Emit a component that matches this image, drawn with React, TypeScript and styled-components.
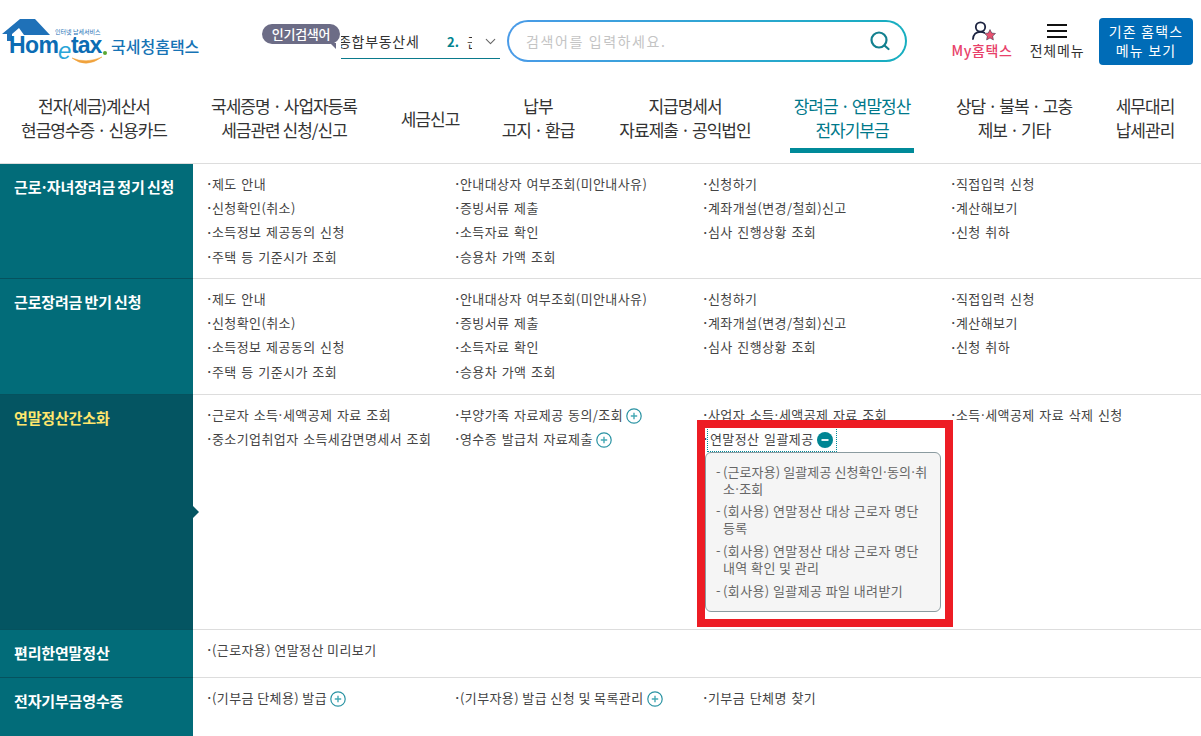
import styled, { createGlobalStyle } from 'styled-components';
import { ChevronDown } from 'lucide-react';

const GlobalStyle = createGlobalStyle`
  html, body { margin: 0; height: 736px; overflow: hidden; background: #fff; }
  body { font-family: "Noto Sans CJK KR", "Noto Sans", sans-serif; color: #333; }
  ul { list-style: none; margin: 0; padding: 0; }
`;

const Page = styled.div`
  position: relative;
  width: 1201px;
`;

const TopBar = styled.header`
  display: flex;
  align-items: flex-start;
  height: 77px;
`;

const LogoBox = styled.div`
  width: 262px;
  padding-top: 14px;
  flex: none;

  svg { display: block; }
`;

const PopularBox = styled.div`
  position: relative;
  width: 159px;
  height: 37px;
  margin: 21px 0 0 79px;
  border-bottom: 1px solid #0a7a8c;
  display: flex;
  align-items: center;
  flex: none;
`;

const PopularBubble = styled.div`
  position: absolute;
  left: -79px;
  top: 3px;
  width: 78px;
  height: 20px;
  border-radius: 10px;
  background: #6c6c86;
  color: #fff;
  font-size: 13px;
  font-weight: 500;
  line-height: 19px;
  text-align: center;
  letter-spacing: -0.3px;

  &::after {
    content: '';
    position: absolute;
    right: 4px;
    bottom: -5px;
    border-top: 6px solid #6c6c86;
    border-left: 6px solid transparent;
  }
`;

const PopularFirst = styled.span`
  width: 106px;
  margin-top: 3px;
  font-size: 14px;
  color: #333;
  letter-spacing: 0.7px;
  white-space: nowrap;
  overflow: hidden;
  flex: none;
  text-indent: -3px;
`;

const PopularSecond = styled.span`
  width: 25px;
  margin-top: 3px;
  font-size: 13px;
  font-weight: 700;
  color: #00838f;
  white-space: nowrap;
  overflow: hidden;
  flex: none;

  i {
    font-style: normal;
    font-weight: 400;
    color: #333;
    margin-left: 8px;
  }
`;

const PopularArrow = styled(ChevronDown)`
  margin: 3px 0 0 10px;
  color: #666;
  flex: none;
`;

const SearchBox = styled.div`
  width: 400px;
  height: 42px;
  margin: 20px 0 0 7px;
  padding: 2px;
  box-sizing: border-box;
  border-radius: 21px;
  background: linear-gradient(90deg, #4a9be8 0%, #16aebf 100%);
  flex: none;
`;

const SearchInner = styled.div`
  height: 100%;
  border-radius: 19px;
  background: #fff;
  display: flex;
  align-items: center;
  justify-content: space-between;
  padding: 0 14px 0 17px;
  color: #c4c4c4;
  font-size: 14px;
  letter-spacing: 1.6px;

  svg { display: block; }
`;

const MyMenu = styled.div`
  width: 64px;
  margin: 21px 0 0 43px;
  display: flex;
  flex-direction: column;
  align-items: center;
  color: #e8416a;
  font-size: 14px;
  line-height: 18px;
  font-weight: 500;
  letter-spacing: 0.6px;
  flex: none;
  white-space: nowrap;

  svg { display: block; margin: 0 0 -1px 3px; }
`;

const AllMenu = styled.div`
  width: 56px;
  margin: 23px 0 0 15px;
  display: flex;
  flex-direction: column;
  align-items: center;
  color: #333;
  font-size: 14px;
  line-height: 18px;
  letter-spacing: 0.8px;
  flex: none;
  white-space: nowrap;

  svg { display: block; margin: 1px 0 3px; }
`;

const OldMenuButton = styled.div`
  width: 94px;
  height: 47px;
  margin: 18px 0 0 14px;
  padding-top: 4px;
  box-sizing: border-box;
  border-radius: 4px;
  background: #006cb7;
  color: #fff;
  font-size: 14px;
  line-height: 18.5px;
  letter-spacing: 1.2px;
  text-align: center;
  flex: none;
`;

const Nav = styled.nav`
  display: grid;
  grid-template-columns: 188px 192px 100px 116px 178px 156px 168px 94px;
  height: 86px;
  border-bottom: 1px solid #ddd;
`;

const NavItem = styled.div`
  display: flex;
  justify-content: center;
  padding-top: 17px;
`;

const NavLabel = styled.div<{ $active?: boolean }>`
  align-self: flex-start;
  min-height: ${(p) => (p.$active ? '54px' : 'auto')};
  padding: 0 4px;
  border-bottom: ${(p) => (p.$active ? '5px solid #008a99' : 'none')};
  color: ${(p) => (p.$active ? '#00788a' : '#333')};
  font-size: 17px;
  line-height: 24px;
  letter-spacing: -1px;
  text-align: center;
  white-space: nowrap;
`;

const SingleLabel = styled(NavLabel)`
  align-self: center;
  margin-top: -19px;
`;

const Row = styled.section<{ $height: number }>`
  display: flex;
  height: ${(p) => p.$height}px;
  border-bottom: 1px solid #ddd;
  box-sizing: border-box;
`;

const Side = styled.h3<{ $current?: boolean }>`
  position: relative;
  width: 193px;
  margin: 0 0 -1px;
  padding: 11px 0 0 14px;
  box-sizing: border-box;
  flex: none;
  background: ${(p) => (p.$current ? '#045562' : '#026c79')};
  border-bottom: 1px solid #05525e;
  color: ${(p) => (p.$current ? '#ffe66d' : '#fff')};
  font-size: 15px;
  line-height: 24px;
  font-weight: 700;
  letter-spacing: -0.15px;
  white-space: nowrap;
  word-spacing: -1px;

  ${(p) =>
    p.$current &&
    `&::after {
      content: '';
      position: absolute;
      left: 100%;
      top: 111px;
      border-left: 6px solid #045562;
      border-top: 6px solid transparent;
      border-bottom: 6px solid transparent;
    }`}
`;

const Columns = styled.div`
  display: grid;
  grid-template-columns: repeat(4, 248px);
  padding: 7px 0 0 14px;
  align-content: start;
`;

const Item = styled.li`
  display: flex;
  align-items: center;
  height: 24.3px;
  font-size: 13px;
  color: #444;
  letter-spacing: 0.4px;
  word-spacing: 1.3px;
  white-space: pre;

  &::before {
    content: '·';
    width: 6px;
    margin-left: -1px;
    flex: none;
    font-weight: 700;
    font-size: 11px;
    letter-spacing: 0;
  }
`;

const NarrowItem = styled(Item)`
  word-spacing: 0;
`;

const Dot = styled.span`
  margin: 0 -1.6px;
`;

const RoundIcon = styled.svg`
  display: block;
  margin: 4px 0 0 3px;
  flex: none;
`;

const Toggle = styled.span`
  display: flex;
  align-items: center;
  height: 24.3px;
  padding: 0 3px 0 2px;
  outline: 1px dotted #008a99;
`;

const SubList = styled.ul`
  width: 236px;
  height: 160px;
  margin: 1px 0 0 2px;
  padding: 10px 8px 0 8px;
  box-sizing: border-box;
  border: 1px solid #8b9ba0;
  border-radius: 6px;
  background: #f5f5f5;
`;

const SubItem = styled.li<{ $tight?: boolean }>`
  position: relative;
  padding-left: 9px;
  margin-bottom: 5.8px;
  color: #666;
  font-size: 13px;
  line-height: 17px;
  letter-spacing: ${(p) => (p.$tight ? '0.1px' : '0.4px')};
  word-break: break-all;

  &::before {
    content: '-';
    position: absolute;
    left: 2px;
    top: -1px;
  }
`;

const Highlight = styled.div`
  position: absolute;
  left: 697px;
  top: 420px;
  width: 256px;
  height: 207px;
  box-sizing: border-box;
  border: 8px solid #ed1c24;
  pointer-events: none;
`;

const Plus = () => (
  <RoundIcon width="16" height="16" viewBox="0 0 16 16">
    <circle cx="8" cy="8" r="7.2" fill="#fff" stroke="#2a93a3" strokeWidth="1.2" />
    <path d="M8 4.8v6.4M4.8 8h6.4" stroke="#45a9b5" strokeWidth="1.4" />
  </RoundIcon>
);

const Minus = () => (
  <RoundIcon width="16" height="16" viewBox="0 0 16 16">
    <circle cx="8" cy="8" r="8" fill="#008593" />
    <path d="M4.5 8h7" stroke="#fff" strokeWidth="1.8" />
  </RoundIcon>
);

const Logo = () => (
  <svg width="205" height="60" viewBox="0 0 205 60">
    <path d="M2 20 L20 5 H35 L50 21 H24 L19 14 L12 20 V27 H7 V20 Z" fill="#1f71b8" />
    <text x="55" y="19.5" fontSize="6" fill="#1a6fb5" fontFamily="Noto Sans CJK KR">인터넷 납세서비스</text>
    <text x="9" y="39" fontSize="23" fontWeight="700" fill="#0b6cb4" letterSpacing="-0.6" fontFamily="Liberation Sans">Hom</text>
    <text x="58" y="45" fontSize="24" fill="#2aa5d8" fontStyle="italic" fontFamily="Liberation Sans">e</text>
    <text x="71" y="39" fontSize="23" fontWeight="700" fill="#0b6cb4" letterSpacing="-1" fontFamily="Liberation Sans">tax</text>
    <circle cx="105" cy="39" r="2" fill="#5aa832" />
    <path d="M72 44 Q86 55 102 43 Q86 50 72 44 Z" fill="#f0a23c" stroke="#f0a23c" strokeWidth="0.5" />
    <text x="111" y="38.5" fontSize="16" fontWeight="500" fill="#1673b5" fontFamily="Noto Sans CJK KR">국세청홈택스</text>
  </svg>
);

// the middle dots sit tighter in the reference than the font's own advance
const dotted = (text: string) =>
  text.split('·').map((part, i) => (
    <span key={i}>{i > 0 && <Dot>·</Dot>}{part}</span>
  ));

const rows = [
  {
    title: '근로·자녀장려금 정기 신청',
    height: 115,
    columns: [
      ['제도 안내', '신청확인(취소)', '소득정보 제공동의 신청', '주택 등 기준시가 조회'],
      ['안내대상자 여부조회(미안내사유)', '증빙서류 제출', '소득자료 확인', '승용차 가액 조회'],
      ['신청하기', '계좌개설(변경/철회)신고', '심사 진행상황 조회'],
      ['직접입력 신청', '계산해보기', '신청 취하'],
    ],
  },
  {
    title: '근로장려금 반기 신청',
    height: 116,
    columns: [
      ['제도 안내', '신청확인(취소)', '소득정보 제공동의 신청', '주택 등 기준시가 조회'],
      ['안내대상자 여부조회(미안내사유)', '증빙서류 제출', '소득자료 확인', '승용차 가액 조회'],
      ['신청하기', '계좌개설(변경/철회)신고', '심사 진행상황 조회'],
      ['직접입력 신청', '계산해보기', '신청 취하'],
    ],
  },
];

const navItems = [
  ['전자(세금)계산서', '현금영수증 · 신용카드'],
  ['국세증명 · 사업자등록', '세금관련 신청/신고'],
  ['세금신고'],
  ['납부', '고지 · 환급'],
  ['지급명세서', '자료제출 · 공익법인'],
  ['장려금 · 연말정산', '전자기부금'],
  ['상담 · 불복 · 고충', '제보 · 기타'],
  ['세무대리', '납세관리'],
];

const subItems = [
  '(근로자용) 일괄제공 신청확인·동의·취소·조회',
  '(회사용) 연말정산 대상 근로자 명단 등록',
  '(회사용) 연말정산 대상 근로자 명단 내역 확인 및 관리',
  '(회사용) 일괄제공 파일 내려받기',
];

export default function App() {
  return (
    <Page>
      <GlobalStyle />
      <TopBar>
        <LogoBox><Logo /></LogoBox>
        <PopularBox>
          <PopularBubble>인기검색어</PopularBubble>
          <PopularFirst>종합부동산세</PopularFirst>
          <PopularSecond>2.<i>근</i></PopularSecond>
          <PopularArrow size={17} strokeWidth={1.5} />
        </PopularBox>
        <SearchBox>
          <SearchInner>
            <span>검색어를 입력하세요.</span>
            <svg width="22" height="22" viewBox="0 0 22 22" fill="none" stroke="#12808f" strokeWidth="2.2">
              <circle cx="10" cy="10" r="7.5" />
              <path d="M15.5 15.5L19.5 19" strokeLinecap="round" />
            </svg>
          </SearchInner>
        </SearchBox>
        <MyMenu>
          <svg width="24" height="21" viewBox="0 0 24 21" fill="none">
            <circle cx="8.5" cy="6" r="4.7" stroke="#1c2340" strokeWidth="1.8" />
            <path d="M1 18c.4-4.8 3.2-7.2 7.5-7.2 1.5 0 2.8.3 3.8 1" stroke="#1c2340" strokeWidth="1.8" strokeLinecap="round" />
            <path d="M18 8.5l1.7 3.5 3.8.5-2.8 2.6.7 3.8-3.4-1.9-3.4 1.9.7-3.8-2.8-2.6 3.8-.5z" fill="#e8526f" stroke="#1c2340" strokeWidth="0.5" />
          </svg>
          My홈택스
        </MyMenu>
        <AllMenu>
          <svg width="20" height="14" viewBox="0 0 20 14" stroke="#111" strokeWidth="2">
            <path d="M0 1h20M0 7h20M0 13h20" />
          </svg>
          전체메뉴
        </AllMenu>
        <OldMenuButton>기존 홈택스<br />메뉴 보기</OldMenuButton>
      </TopBar>

      <Nav>
        {navItems.map((lines, i) => {
          const Label = lines.length === 1 ? SingleLabel : NavLabel;
          return (
            <NavItem key={lines[0]}>
              <Label $active={i === 5}>
                {lines.map((line) => <div key={line}>{line}</div>)}
              </Label>
            </NavItem>
          );
        })}
      </Nav>

      {rows.map((row) => (
        <Row key={row.title} $height={row.height}>
          <Side>{dotted(row.title)}</Side>
          <Columns>
            {row.columns.map((col, i) => (
              <ul key={i}>
                {col.map((text) => <Item key={text}>{text}</Item>)}
              </ul>
            ))}
          </Columns>
        </Row>
      ))}

      <Row $height={235}>
        <Side $current>연말정산간소화</Side>
        <Columns>
          <ul>
            <Item>{dotted('근로자 소득·세액공제 자료 조회')}</Item>
            <Item>중소기업취업자 소득세감면명세서 조회</Item>
          </ul>
          <ul>
            <Item>부양가족 자료제공 동의/조회<Plus /></Item>
            <Item>영수증 발급처 자료제출<Plus /></Item>
          </ul>
          <ul>
            <Item>{dotted('사업자 소득·세액공제 자료 조회')}</Item>
            <Item><Toggle>연말정산 일괄제공<Minus /></Toggle></Item>
            <li>
              <SubList>
                {subItems.map((text, i) => (
                  <SubItem key={text} $tight={i === 0}>{dotted(text)}</SubItem>
                ))}
              </SubList>
            </li>
          </ul>
          <ul>
            <Item>{dotted('소득·세액공제 자료 삭제 신청')}</Item>
          </ul>
        </Columns>
      </Row>

      <Row $height={48}>
        <Side>편리한연말정산</Side>
        <Columns>
          <ul>
            <NarrowItem>(근로자용) 연말정산 미리보기</NarrowItem>
          </ul>
        </Columns>
      </Row>

      <Row $height={60}>
        <Side>전자기부금영수증</Side>
        <Columns>
          <ul>
            <NarrowItem>(기부금 단체용) 발급<Plus /></NarrowItem>
          </ul>
          <ul>
            <NarrowItem>(기부자용) 발급 신청 및 목록관리<Plus /></NarrowItem>
          </ul>
          <ul>
            <Item>기부금 단체명 찾기</Item>
          </ul>
        </Columns>
      </Row>

      <Highlight />
    </Page>
  );
}
